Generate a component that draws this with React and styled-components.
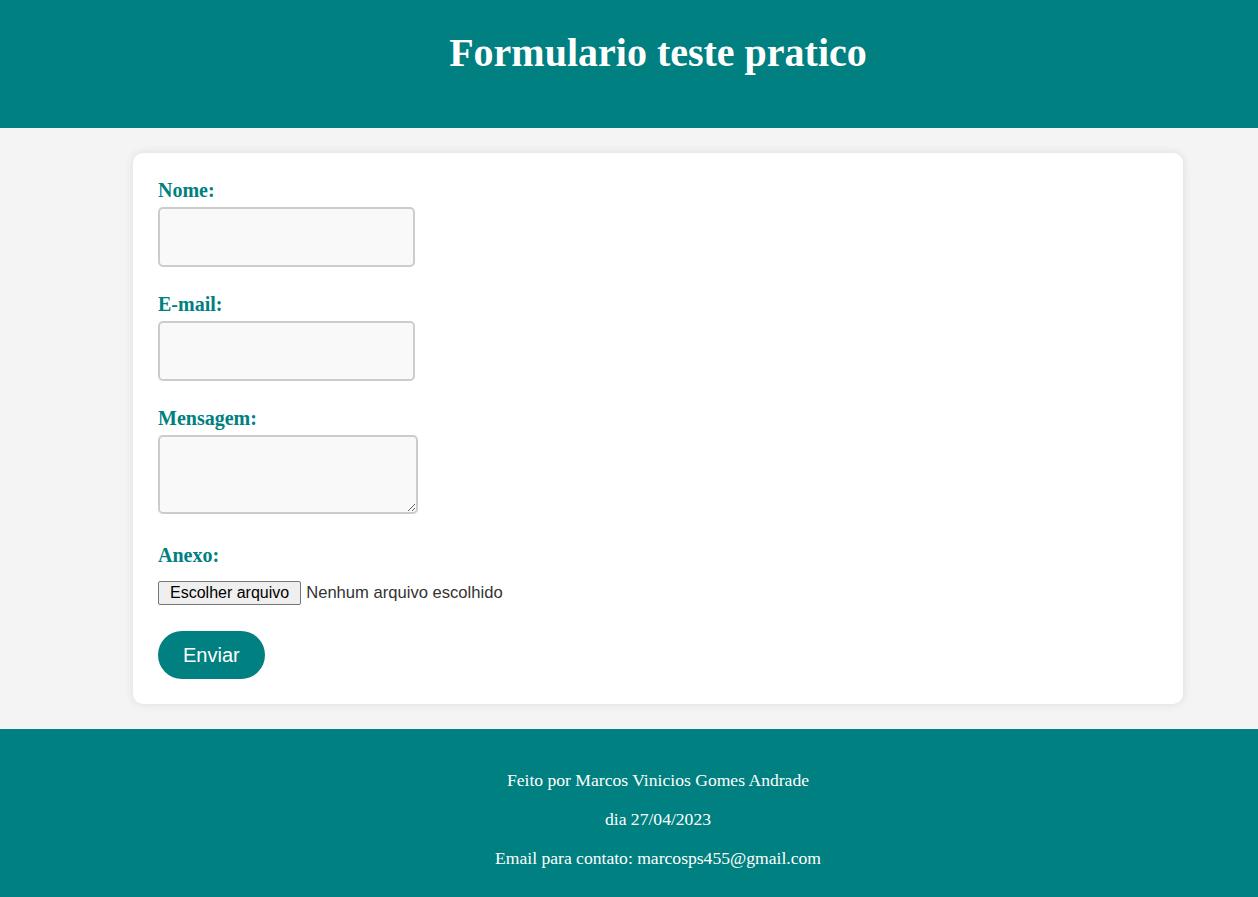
import styled, {createGlobalStyle} from "styled-components";

const GlobalStyle = createGlobalStyle`
  html, body {
    margin: 0;
    padding: 0;
  }

  body {
    background-color: #f4f4f4;
    font-family: "Liberation Serif", "Times New Roman", serif;
  }
`

const Header = styled.header`
  background-color: #008080;
  color: #fff;
  text-align: center;
  padding: 30px 0 52px 58px;

  h1 {
    margin: 0;
    font-size: 40px;
    line-height: 46px;
    font-weight: bold;
  }
`

const Main = styled.main`
  padding: 25px 75px 25px 133px;
`

const Card = styled.form`
  background-color: #fff;
  border-radius: 10px;
  box-shadow: 0 0 10px rgba(0, 0, 0, 0.1);
  padding: 26px 25px 25px;
  display: flex;
  flex-direction: column;
  align-items: flex-start;
`

const Field = styled.div`
  display: flex;
  flex-direction: column;
  align-items: flex-start;
  margin-bottom: ${({$gap}) => $gap || 26}px;
`

const Label = styled.label`
  color: #008080;
  font-size: 20px;
  font-weight: bold;
  margin-bottom: ${({$gap}) => $gap || 5}px;
`

const TextInput = styled.input`
  box-sizing: border-box;
  width: 257px;
  height: 60px;
  padding: 10px;
  border: 2px solid #ccc;
  border-radius: 5px;
  background-color: #f9f9f9;
  font-size: 16px;
  outline: none;
`

const TextArea = styled.textarea`
  box-sizing: border-box;
  display: block;
  width: 260px;
  height: 79px;
  padding: 10px;
  border: 2px solid #ccc;
  border-radius: 5px;
  background-color: #f9f9f9;
  font-size: 16px;
  outline: none;
`

const FileRow = styled.div`
  display: flex;
  align-items: center;
  font-family: "Liberation Sans", Arial, sans-serif;
  font-size: 16px;
  color: #333;

  span {
    font-size: 16.6px;
  }

  input {
    display: none;
  }
`

const FileButton = styled.label`
  box-sizing: border-box;
  height: 24px;
  padding: 0 11px;
  display: flex;
  align-items: center;
  border: 1px solid #767676;
  border-radius: 2px;
  background-color: #efefef;
  color: #000;
  margin-right: 5px;
  cursor: default;
`

const SubmitButton = styled.button`
  box-sizing: border-box;
  height: 48px;
  padding: 0 25px;
  border: none;
  border-radius: 24px;
  background-color: #008080;
  color: #fff;
  font-family: "Liberation Sans", Arial, sans-serif;
  font-size: 20px;
  cursor: pointer;
`

const Footer = styled.footer`
  background-color: #008080;
  color: #fff;
  text-align: center;
  padding: 23px 0 20px 58px;

  p {
    margin: 18px 0;
    font-size: 17.6px;
    line-height: 21px;
  }
`

export default function App() {
    return (
        <>
            <GlobalStyle/>
            <Header>
                <h1>Formulario teste pratico</h1>
            </Header>
            <Main>
                <Card onSubmit={(e) => e.preventDefault()}>
                    <Field>
                        <Label htmlFor="nome">Nome:</Label>
                        <TextInput id="nome" type="text"/>
                    </Field>
                    <Field>
                        <Label htmlFor="email">E-mail:</Label>
                        <TextInput id="email" type="email"/>
                    </Field>
                    <Field $gap={30}>
                        <Label htmlFor="mensagem">Mensagem:</Label>
                        <TextArea id="mensagem"/>
                    </Field>
                    <Field>
                        <Label htmlFor="anexo" $gap={14}>Anexo:</Label>
                        <FileRow>
                            <FileButton htmlFor="anexo">Escolher arquivo</FileButton>
                            <span>Nenhum arquivo escolhido</span>
                            <input id="anexo" type="file"/>
                        </FileRow>
                    </Field>
                    <SubmitButton type="submit">Enviar</SubmitButton>
                </Card>
            </Main>
            <Footer>
                <p>Feito por Marcos Vinicios Gomes Andrade</p>
                <p>dia 27/04/2023</p>
                <p>Email para contato: marcosps455@gmail.com</p>
            </Footer>
        </>
    )
}
